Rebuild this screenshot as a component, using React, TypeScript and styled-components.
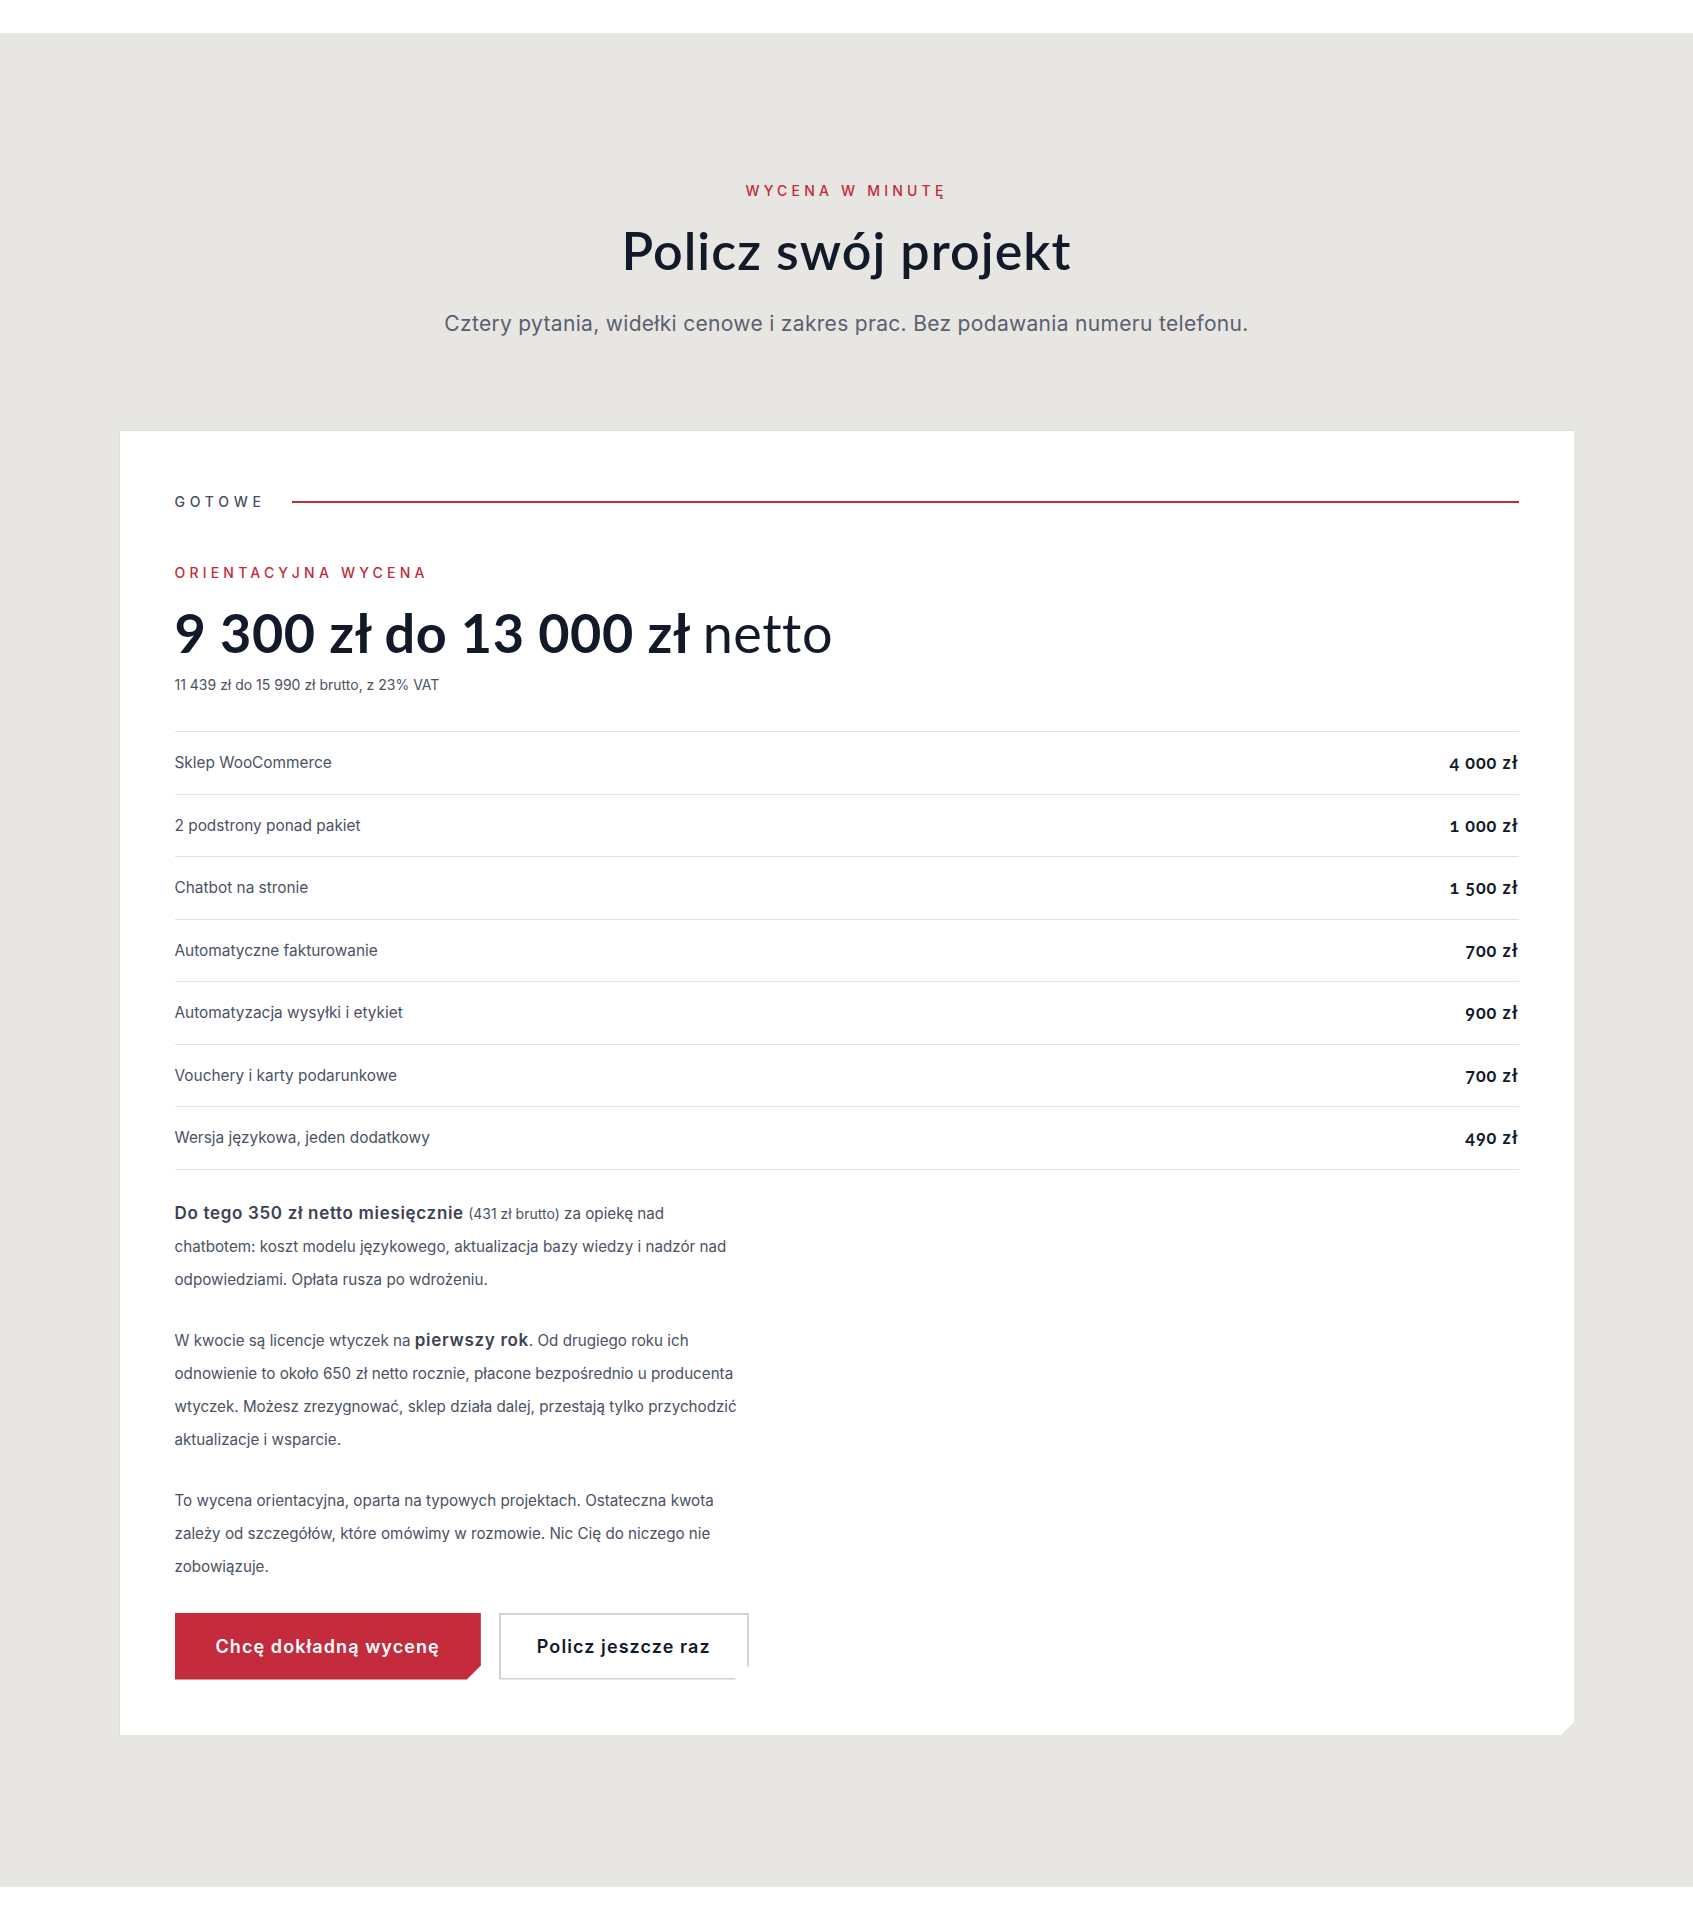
import React from "react";
import styled, { createGlobalStyle } from "styled-components";

const GlobalStyle = createGlobalStyle`
  html, body {
    margin: 0;
    padding: 0;
    background: #fff;
  }
  body {
    font-family: Inter, "Noto Sans", sans-serif;
    color: #121a2a;
  }
  * {
    box-sizing: border-box;
  }
`;

const Section = styled.section`
  margin-top: 33px;
  background: #e8e6e2;
  padding: 148px 24px 151px;
`;

const Header = styled.header`
  display: flex;
  flex-direction: column;
  align-items: center;
  text-align: center;
`;

const Eyebrow = styled.span<{ $tone?: "red" | "gray" }>`
  font-family: Inter, sans-serif;
  font-size: 14px;
  line-height: 20px;
  font-weight: 500;
  letter-spacing: 0.3em;
  text-transform: uppercase;
  color: ${(p) => (p.$tone === "gray" ? "#4a5060" : "#c22b3b")};
`;

const Title = styled.h1`
  margin: 16px 0 0;
  font-family: Lato, sans-serif;
  font-size: 52px;
  line-height: 67px;
  font-weight: 600;
  letter-spacing: 0.02em;
  color: #121a2a;
`;

const Lead = styled.p`
  margin: 24px 0 0;
  font-size: 21px;
  line-height: 32px;
  letter-spacing: 0.015em;
  color: #5b6070;
`;

const Card = styled.div`
  max-width: 1456px;
  margin: 90px auto 0;
  background: #fff;
  border: 1px solid #dfddd8;
  padding: 55px;
  clip-path: polygon(0 0, 100% 0, 100% calc(100% - 14px), calc(100% - 14px) 100%, 0 100%);
`;

const Progress = styled.div`
  display: flex;
  align-items: center;
  gap: 26px;
  height: 32px;
`;

const ProgressLabel = styled(Eyebrow)`
  letter-spacing: 0.34em;
`;

const ProgressLine = styled.div`
  flex: 1;
  height: 2px;
  background: #c22b3b;
`;

const ResultLabel = styled(Eyebrow)`
  display: block;
  margin-top: 45px;
`;

const Price = styled.div`
  margin-top: 19px;
  font-family: Lato, sans-serif;
  font-size: 54px;
  line-height: 62px;
  font-weight: 700;
  letter-spacing: 0.01em;
  color: #121a2a;
`;

const PriceUnit = styled.span`
  font-weight: 400;
`;

const Gross = styled.div`
  margin-top: 11px;
  font-size: 14px;
  line-height: 20px;
  color: #4b5263;
  font-variant-numeric: oldstyle-nums;
`;

const Items = styled.ul`
  list-style: none;
  margin: 36px 0 0;
  padding: 0;
  border-top: 1px solid #e2e2e2;
`;

const Item = styled.li`
  display: flex;
  justify-content: space-between;
  align-items: center;
  padding: 20px 0;
  line-height: 21.5px;
  border-bottom: 1px solid #e2e2e2;
`;

const ItemName = styled.span`
  font-size: 15.4px;
  color: #4b5263;
`;

const ItemPrice = styled.span`
  font-family: Lato, sans-serif;
  font-size: 18px;
  font-weight: 700;
  letter-spacing: 0.05em;
  color: #121a2a;
  font-variant-numeric: oldstyle-nums;
`;

const Notes = styled.div`
  margin-top: 27px;
  max-width: 566px;
  display: flex;
  flex-direction: column;
  gap: 28px;
`;

const Note = styled.p`
  margin: 0;
  font-size: 15.2px;
  line-height: 33px;
  color: #4b5263;
  font-variant-numeric: oldstyle-nums;

  strong {
    font-size: 17px;
    line-height: 1;
    font-weight: 600;
    letter-spacing: 0.04em;
    color: #3c4252;
  }
`;

const Small = styled.span`
  font-size: 14px;
  line-height: 1;
`;

const Actions = styled.div`
  display: flex;
  gap: 18px;
  margin-top: 30px;
`;

const ActionButton = styled.button<{ $primary?: boolean }>`
  height: 67px;
  padding: 0 ${(p) => (p.$primary ? "41px" : "36px")};
  font-family: Inter, sans-serif;
  font-size: 18px;
  font-weight: 600;
  letter-spacing: 0.06em;
  cursor: pointer;
  background: ${(p) => (p.$primary ? "#c42b3c" : "#fff")};
  color: ${(p) => (p.$primary ? "#fff" : "#121a2a")};
  border: ${(p) => (p.$primary ? "none" : "2px solid #d2d2d2")};
  clip-path: polygon(0 0, 100% 0, 100% calc(100% - 14px), calc(100% - 14px) 100%, 0 100%);
`;

const items = [
  { name: "Sklep WooCommerce", price: "4 000 zł" },
  { name: "2 podstrony ponad pakiet", price: "1 000 zł" },
  { name: "Chatbot na stronie", price: "1 500 zł" },
  { name: "Automatyczne fakturowanie", price: "700 zł" },
  { name: "Automatyzacja wysyłki i etykiet", price: "900 zł" },
  { name: "Vouchery i karty podarunkowe", price: "700 zł" },
  { name: "Wersja językowa, jeden dodatkowy", price: "490 zł" },
];

export default function App() {
  return (
    <>
      <GlobalStyle />
      <Section>
        <Header>
          <Eyebrow>Wycena w minutę</Eyebrow>
          <Title>Policz swój projekt</Title>
          <Lead>Cztery pytania, widełki cenowe i zakres prac. Bez podawania numeru telefonu.</Lead>
        </Header>

        <Card>
          <Progress>
            <ProgressLabel $tone="gray">Gotowe</ProgressLabel>
            <ProgressLine />
          </Progress>

          <ResultLabel>Orientacyjna wycena</ResultLabel>
          <Price>
            9 300 zł do 13 000 zł <PriceUnit>netto</PriceUnit>
          </Price>
          <Gross>11 439 zł do 15 990 zł brutto, z 23% VAT</Gross>

          <Items>
            {items.map((it) => (
              <Item key={it.name}>
                <ItemName>{it.name}</ItemName>
                <ItemPrice>{it.price}</ItemPrice>
              </Item>
            ))}
          </Items>

          <Notes>
            <Note>
              <strong>Do tego 350 zł netto miesięcznie</strong> <Small>(431 zł brutto)</Small> za opiekę nad
              chatbotem: koszt modelu językowego, aktualizacja bazy wiedzy i nadzór nad odpowiedziami. Opłata
              rusza po wdrożeniu.
            </Note>
            <Note>
              W kwocie są licencje wtyczek na <strong>pierwszy rok</strong>. Od drugiego roku ich odnowienie to
              około 650 zł netto rocznie, płacone bezpośrednio u producenta wtyczek. Możesz zrezygnować, sklep
              działa dalej, przestają tylko przychodzić aktualizacje i wsparcie.
            </Note>
            <Note>
              To wycena orientacyjna, oparta na typowych projektach. Ostateczna kwota zależy od szczegółów, które
              omówimy w rozmowie. Nic Cię do niczego nie zobowiązuje.
            </Note>
          </Notes>

          <Actions>
            <ActionButton $primary>Chcę dokładną wycenę</ActionButton>
            <ActionButton>Policz jeszcze raz</ActionButton>
          </Actions>
        </Card>
      </Section>
    </>
  );
}
